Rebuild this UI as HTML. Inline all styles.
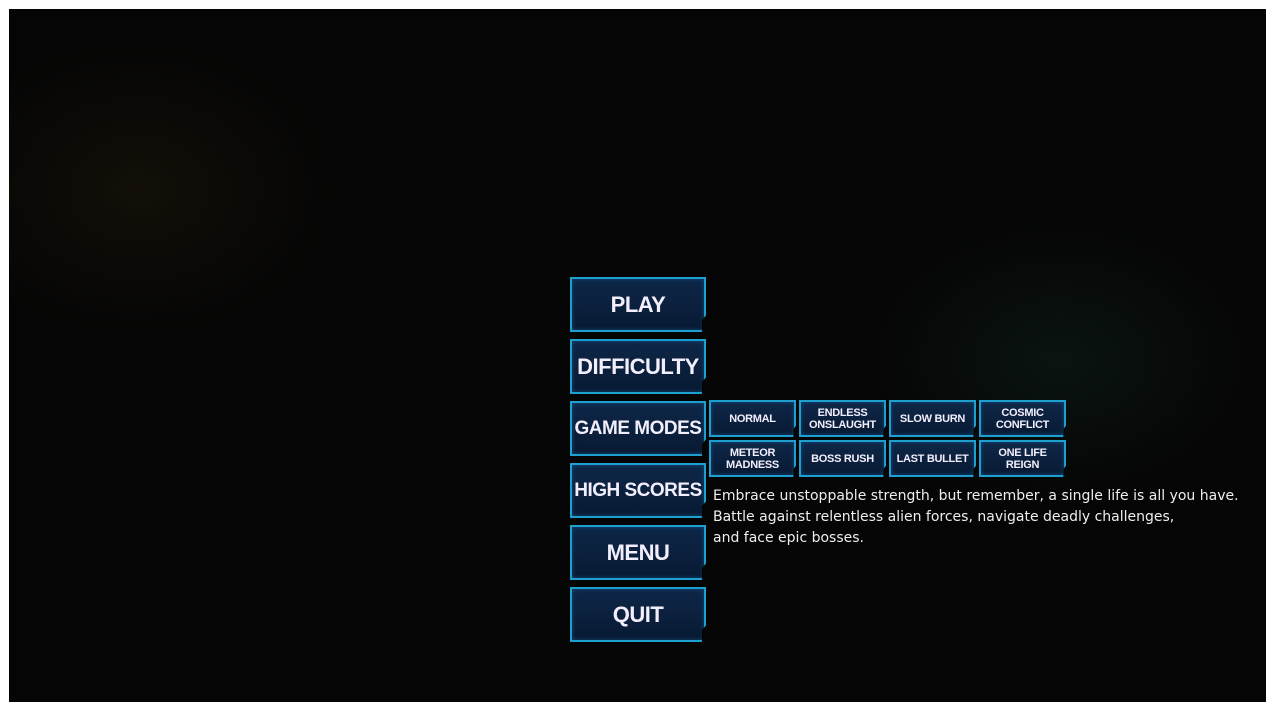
<!DOCTYPE html>
<html><head><meta charset="utf-8"><style>
body{margin:0;width:1274px;height:711px;background:#fff;overflow:hidden;font-family:"DejaVu Sans","Liberation Sans",sans-serif}
#bg{position:absolute;left:9px;top:9px;width:1257px;height:693px;background:radial-gradient(ellipse 200px 150px at 130px 180px,#130f08,transparent),radial-gradient(ellipse 200px 140px at 1050px 350px,#0a1411,transparent),#050505;}
.b{position:absolute;box-sizing:border-box;background:linear-gradient(#0e2748,#081a33);border:2px solid #1d9fd0;box-shadow:0 0 3px #1aa6dc,inset 0 0 4px #124a7a;color:#f2eefc;font-weight:bold;text-align:center;display:flex;align-items:center;justify-content:center;white-space:nowrap;font-family:"Liberation Sans",sans-serif;clip-path:polygon(0 0,100% 0,100% 70%,97% 78%,97% 100%,0 100%)}
.m{left:570px;width:136px;height:55px;font-size:22px;letter-spacing:-0.5px}
.s{width:87px;height:37px;font-size:11px;line-height:12px;letter-spacing:-0.3px}
#t{position:absolute;left:713px;top:486px;color:#eee;font-size:14px;line-height:21px;font-family:"DejaVu Sans",sans-serif;letter-spacing:0}
</style></head><body><div id="bg"></div>
<div class="b m" style="top:277px">PLAY</div>
<div class="b m" style="top:339px">DIFFICULTY</div>
<div class="b m" style="top:401px;font-size:19px">GAME MODES</div>
<div class="b m" style="top:463px;font-size:19px">HIGH SCORES</div>
<div class="b m" style="top:525px">MENU</div>
<div class="b m" style="top:587px">QUIT</div>
<div class="b s" style="left:709px;top:400px">NORMAL</div>
<div class="b s" style="left:799px;top:400px">ENDLESS<br>ONSLAUGHT</div>
<div class="b s" style="left:889px;top:400px">SLOW BURN</div>
<div class="b s" style="left:979px;top:400px">COSMIC<br>CONFLICT</div>
<div class="b s" style="left:709px;top:440px">METEOR<br>MADNESS</div>
<div class="b s" style="left:799px;top:440px">BOSS RUSH</div>
<div class="b s" style="left:889px;top:440px">LAST BULLET</div>
<div class="b s" style="left:979px;top:440px">ONE LIFE<br>REIGN</div>
<div id="t">Embrace unstoppable strength, but remember, a single life is all you have.<br>Battle against relentless alien forces, navigate deadly challenges,<br>and face epic bosses.</div>
</body></html>
